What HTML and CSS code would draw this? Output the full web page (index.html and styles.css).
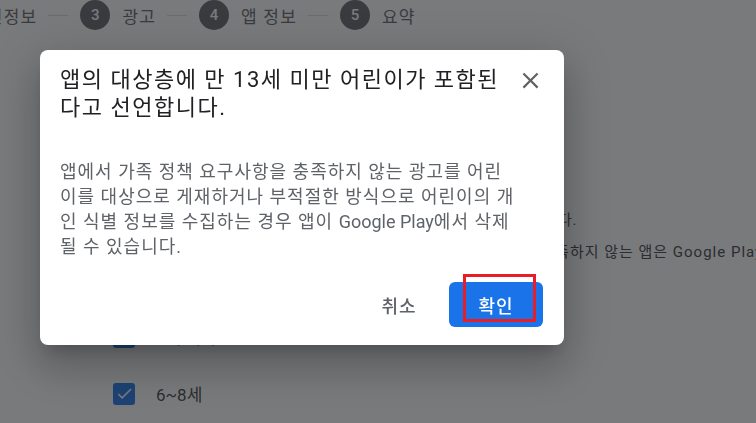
FILE: index.html
```html
<!DOCTYPE html>
<html lang="ko">
    <head>
        <meta charset="UTF-8" />
        <meta name="viewport" content="width=device-width, initial-scale=1.0" />
        <title>타겟층 및 콘텐츠</title>
        <link rel="stylesheet" href="styles.css">
    </head>
    <body>
        <div class="page">
            <nav class="stepper">
                <span class="step-label first">개인정보</span>
                <span class="step-line"></span>
                <span class="step-num">3</span>
                <span class="step-label">광고</span>
                <span class="step-line"></span>
                <span class="step-num">4</span>
                <span class="step-label">앱 정보</span>
                <span class="step-line"></span>
                <span class="step-num">5</span>
                <span class="step-label">요약</span>
            </nav>

            <div class="content">
                <p class="note note-lead">타겟층에 어린이가 포함된 경우 가족 정책 요구사항을 준수해야 합니다.</p>
                <p class="note">특히 광고를 게재하는 앱을 포함하여 모든 가족 정책 요구사항을 충족하지 않는 앱은 Google Play에서 삭제될 수 있습니다.</p>
                <ul class="ages">
                    <li class="age">
                        <span class="checkbox"><svg viewBox="0 0 24 24"><path d="M9 16.17L4.83 12l-1.42 1.41L9 19 21 7l-1.41-1.41z"/></svg></span>
                        5세 이하
                    </li>
                    <li class="age">
                        <span class="checkbox"><svg viewBox="0 0 24 24"><path d="M9 16.17L4.83 12l-1.42 1.41L9 19 21 7l-1.41-1.41z"/></svg></span>
                        6~8세
                    </li>
                </ul>
            </div>
        </div>

        <!-- confirm dialog over the page -->
        <div class="scrim"></div>
        <div class="dialog">
            <div class="dialog-header">
                <h2 class="dialog-title">앱의 대상층에 만 13세 미만 어린이가 포함된다고 선언합니다.</h2>
                <button class="close-btn" aria-label="닫기">
                    <svg viewBox="0 0 24 24"><path d="M19 6.41L17.59 5 12 10.59 6.41 5 5 6.41 10.59 12 5 17.59 6.41 19 12 13.41 17.59 19 19 17.59 13.41 12z"/></svg>
                </button>
            </div>
            <p class="dialog-body">앱에서 가족 정책 요구사항을 충족하지 않는 광고를 어린이를 대상으로 게재하거나 부적절한 방식으로 어린이의 개인 식별 정보를 수집하는 경우 앱이 <span class="brand">Google Play</span>에서 삭제될 수 있습니다.</p>
            <div class="dialog-actions">
                <button class="btn btn-text">취소</button>
                <button class="btn btn-primary">확인<span class="highlight"></span></button>
            </div>
        </div>
    </body>
</html>
```

FILE: styles.css
```css
body {
    margin: 0;
    font-family: Roboto, "Noto Sans CJK KR", sans-serif;
    background-color: #fff;
    color: #202124;
    overflow: hidden;
}
.page {
    height: 423px;
}
.stepper {
    display: flex;
    align-items: center;
    height: 30px;
    margin-left: -30px;
}
.step-label {
    font-size: 17px;
    letter-spacing: 1.2px;
    color: #5f6368;
    white-space: nowrap;
}
.step-line {
    width: 20px;
    height: 1px;
    background-color: #dadce0;
    margin: 0 12px 0 11px;
}
.step-num {
    display: flex;
    align-items: center;
    justify-content: center;
    width: 30px;
    height: 30px;
    border-radius: 50%;
    background-color: #5f6368;
    color: #fff;
    font-size: 15px;
    font-weight: 500;
    margin-right: 12px;
}
.content {
    padding-left: 113px;
    padding-top: 178px;
}
.note {
    margin: 0 0 8px;
    font-size: 15px;
    line-height: 24px;
    letter-spacing: 1px;
    color: #3c4043;
    white-space: nowrap;
}
.note-lead {
    letter-spacing: 0.8px;
}
.ages {
    list-style: none;
    margin: 44px 0 0;
    padding: 0;
}
.age {
    display: flex;
    align-items: center;
    height: 57px;
    font-size: 17px;
    color: #3c4043;
}
.checkbox {
    display: flex;
    align-items: center;
    justify-content: center;
    width: 22px;
    height: 22px;
    border-radius: 3px;
    background-color: #1a73e8;
    margin-right: 21px;
}
.checkbox svg {
    width: 19px;
    height: 19px;
    fill: #fff;
}
.scrim {
    position: fixed;
    inset: 0;
    background-color: rgba(32, 33, 36, 0.6);
}
.dialog {
    position: absolute;
    left: 40px;
    top: 50px;
    width: 524px;
    height: 295px;
    box-sizing: border-box;
    padding: 16px 21px 18px 20px;
    background-color: #fff;
    border-radius: 8px;
    box-shadow: 0 11px 15px -7px rgba(0, 0, 0, 0.2), 0 24px 38px 3px rgba(0, 0, 0, 0.14), 0 9px 46px 8px rgba(0, 0, 0, 0.12);
    display: flex;
    flex-direction: column;
}
.dialog-header {
    display: flex;
    align-items: flex-start;
    gap: 8px;
}
.dialog-title {
    flex: 1;
    margin: 0;
    font-size: 22px;
    font-weight: 400;
    line-height: 28px;
    letter-spacing: 1.5px;
    color: #202124;
}
.close-btn {
    flex: none;
    display: flex;
    align-items: center;
    justify-content: center;
    width: 32px;
    height: 32px;
    margin-top: -2px;
    margin-right: -3px;
    padding: 0;
    border: none;
    background: none;
}
.close-btn svg {
    width: 27px;
    height: 27px;
    fill: #5f6368;
}
.dialog-body {
    margin: 37px 25px 0 0;
    font-size: 18px;
    line-height: 25px;
    letter-spacing: 1px;
    color: #5f6368;
}
.brand {
    letter-spacing: 0;
}
.dialog-actions {
    margin-top: auto;
    display: flex;
    justify-content: flex-end;
    gap: 3px;
}
.btn {
    position: relative;
    width: 94px;
    height: 45px;
    border: none;
    border-radius: 6px;
    font-family: inherit;
    font-size: 18px;
    font-weight: 500;
    letter-spacing: 1px;
    cursor: pointer;
}
.btn-text {
    background: none;
    color: #5f6368;
}
.btn-primary {
    background-color: #1a73e8;
    color: #fff;
}
.highlight {
    position: absolute;
    left: 14px;
    top: -8px;
    width: 73px;
    height: 48px;
    box-sizing: border-box;
    border: 3px solid #e81e26;
}
```
